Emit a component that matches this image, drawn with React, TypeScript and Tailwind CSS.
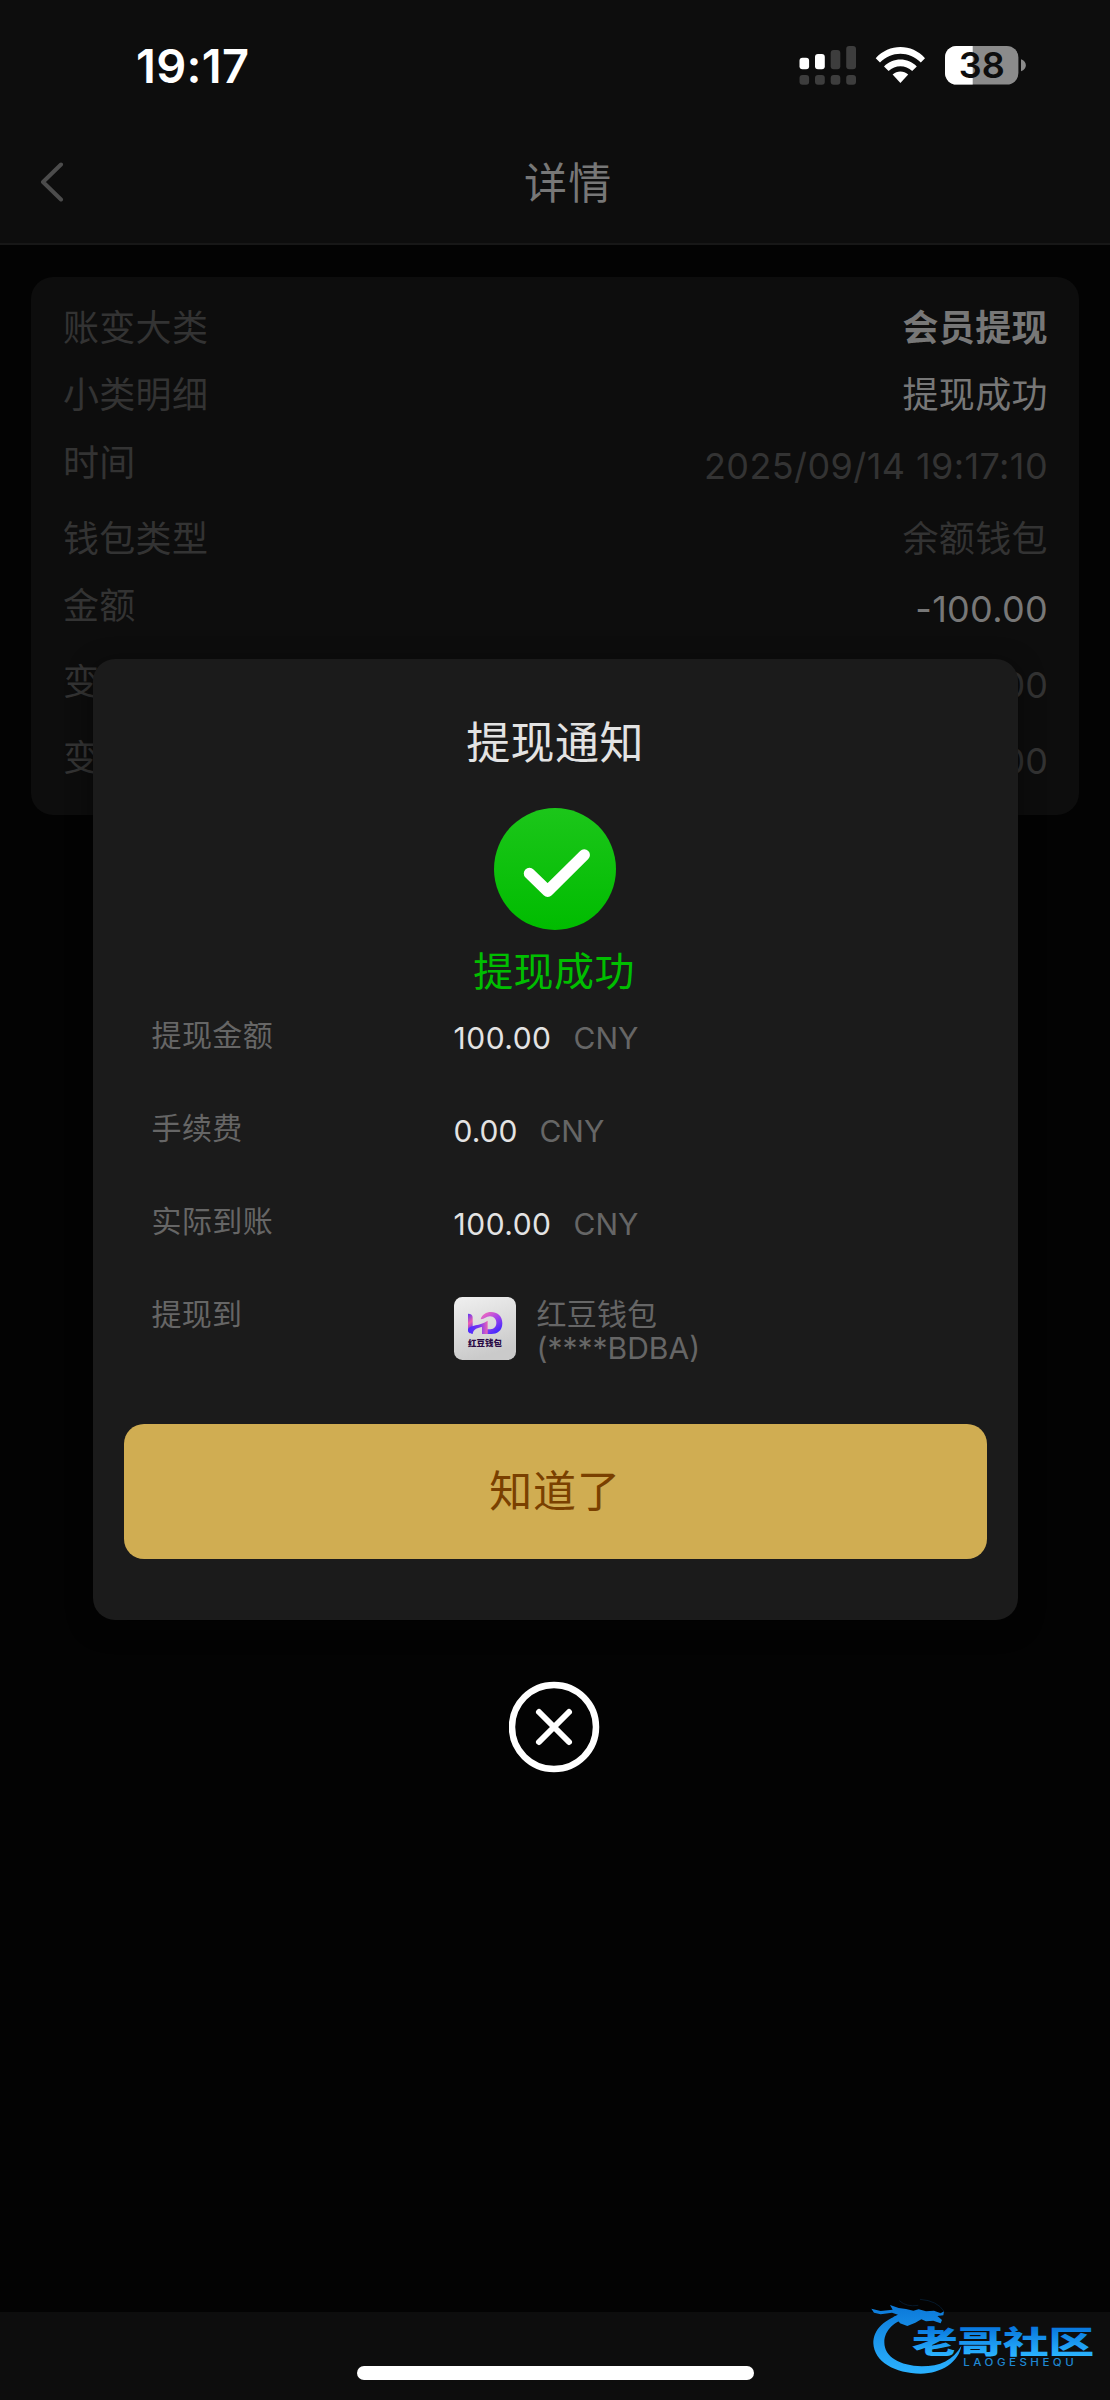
import React from "react";

type DetailRow = {
  label: string;
  value: string;
  height: string;
  valueClass: string;
};

const details: DetailRow[] = [
  { label: "账变大类", value: "会员提现", height: "h-[67px]", valueClass: "font-bold text-[#777] tracking-[0.4px]" },
  { label: "小类明细", value: "提现成功", height: "h-[68px]", valueClass: "text-[#777] tracking-[0.4px]" },
  { label: "时间", value: "2025/09/14 19:17:10", height: "h-[76px]", valueClass: "pt-[3px] text-[#333] tracking-[0.4px]" },
  { label: "钱包类型", value: "余额钱包", height: "h-[67px]", valueClass: "text-[#333] tracking-[0.4px]" },
  { label: "金额", value: "-100.00", height: "h-[76px]", valueClass: "pt-[3px] text-[#777] tracking-[0.3px]" },
  { label: "变更前", value: "100.00", height: "h-[76px]", valueClass: "pt-[3px] text-[#333]" },
  { label: "变更后", value: "0.00", height: "h-[50px]", valueClass: "pt-[3px] text-[#333]" },
];

const amounts = [
  { label: "提现金额", value: "100.00", valueClass: "tracking-[0.5px]" },
  { label: "手续费", value: "0.00", valueClass: "tracking-normal" },
  { label: "实际到账", value: "100.00", valueClass: "tracking-[0.5px]" },
];

const StatusIcons: React.FC = () => (
  <svg width="230" height="42" viewBox="798 44 230 42">
    <g fill="#fff">
      <rect x="799.5" y="57.8" width="9.6" height="11.4" rx="3" />
      <rect x="815" y="54" width="9.8" height="15.2" rx="3" />
    </g>
    <g fill="#3d3d3d">
      <rect x="830.7" y="50" width="9.6" height="19.2" rx="3" />
      <rect x="846.2" y="46" width="9.8" height="23.2" rx="3" />
      <rect x="799.5" y="75" width="9.6" height="9.8" rx="3" />
      <rect x="815" y="75" width="9.8" height="9.8" rx="3" />
      <rect x="830.7" y="75" width="9.6" height="9.8" rx="3" />
      <rect x="846.2" y="75" width="9.8" height="9.8" rx="3" />
    </g>
    <g fill="#fff">
      <path d="M875.7 58.2C889 43.2 912 43.2 925 58.2L920.8 62.4C909.5 50.8 891.3 50.8 880 62.4Z" />
      <path d="M884 66.4C893 57.2 907.8 57.2 916.8 66.4L912.2 71C905.6 64.6 895.2 64.6 888.6 71Z" />
      <path d="M892.6 74.6C897 70.6 903.8 70.6 908.2 74.6L900.4 83Z" />
    </g>
    <clipPath id="charge">
      <rect x="945" y="46" width="73.4" height="38.6" rx="11.5" />
    </clipPath>
    <g clipPath="url(#charge)">
      <rect x="945" y="46" width="74" height="39" fill="#8b8b8b" />
      <rect x="945" y="46" width="27.7" height="39" fill="#fff" />
    </g>
    <path d="M1021 59.3C1027.5 61.5 1027.5 69 1021 71.3Z" fill="#8b8b8b" />
    <text x="981.8" y="78.3" fontSize="36" fontWeight="600" textAnchor="middle" fill="#0d0d0d">38</text>
  </svg>
);

const WalletLogo: React.FC = () => (
  <svg width="62" height="63" viewBox="72 81 186 189" className="shrink-0">
    <defs>
      <linearGradient id="tile" x1="0" y1="0" x2="0.3" y2="1">
        <stop offset="0" stopColor="#f0f0f0" />
        <stop offset="1" stopColor="#cacaca" />
      </linearGradient>
      <linearGradient id="stem" x1="0" y1="0" x2="0.2" y2="1">
        <stop offset="0" stopColor="#5b35f5" />
        <stop offset="0.55" stopColor="#ee5fae" />
        <stop offset="1" stopColor="#5a2df5" />
      </linearGradient>
      <linearGradient id="bar" x1="0" y1="0" x2="1" y2="0">
        <stop offset="0" stopColor="#4a2bff" />
        <stop offset="0.6" stopColor="#7a35f0" />
        <stop offset="1" stopColor="#e864b8" />
      </linearGradient>
      <linearGradient id="bowl" x1="0" y1="0" x2="0.7" y2="1">
        <stop offset="0" stopColor="#ff74b4" />
        <stop offset="0.5" stopColor="#a944e8" />
        <stop offset="1" stopColor="#3f28ff" />
      </linearGradient>
    </defs>
    <rect x="72" y="81" width="186" height="189" rx="25" fill="url(#tile)" />
    <path d="M114 131Q128 131 128 143V172L114 186Z" fill="url(#stem)" />
    <path d="M152 148C158 118 217 116 217 160C217 184 200 192 184 192H158L172 178H181C206 178 205 139 180 139C168 139 164 148 152 148Z" fill="url(#bowl)" />
    <path d="M114 178C120 163 150 169 173 152V192H156V171C144 174 130 176 128 192C118 192 114 188 114 178Z" fill="url(#bar)" />
    <text x="165" y="227" fontSize="25.5" fontWeight="900" textAnchor="middle" fill="#2a0a45">红豆钱包</text>
  </svg>
);

const CommunityMark: React.FC = () => (
  <svg width="260" height="120" viewBox="0 0 780 360" className="absolute right-0 bottom-0">
    <defs>
      <linearGradient id="ring" gradientUnits="userSpaceOnUse" x1="0" y1="75" x2="0" y2="280">
        <stop offset="0" stopColor="#0b78d8" />
        <stop offset="1" stopColor="#2bb2ff" />
      </linearGradient>
      <linearGradient id="word" gradientUnits="userSpaceOnUse" x1="0" y1="-82" x2="0" y2="8">
        <stop offset="0" stopColor="#0674dc" />
        <stop offset="1" stopColor="#2bb4ff" />
      </linearGradient>
    </defs>
    <g fill="url(#ring)">
      <path d="M170 98C100 115 70 150 70 190C72 245 135 281 212 281C275 280 327 245 334 197C310 240 270 259 215 259C150 257 103 232 103 187C103 150 135 120 180 114Z" />
      <path d="M64 86L92 93L128 89L120 75L146 84L168 87L190 92L206 88L228 94L252 92L272 100L282 94L280 106L262 108L276 120L272 130L250 122L228 124L214 118L196 128L172 138L150 130L140 116L128 112L144 104L126 98L92 103L72 98Z" />
    </g>
    <g fill="none" stroke="#06192a" strokeWidth="3">
      <path d="M148 62Q170 82 205 76" />
      <path d="M210 58Q262 62 282 94" />
    </g>
    <text transform="translate(186 220) scale(1.49 1)" fontSize="92" fontWeight="900" fill="url(#word)" textLength="367" lengthAdjust="spacing">老哥社区</text>
    <text transform="translate(340 259) scale(1.15 1)" fontSize="30" fontWeight="500" fill="#1f88d2" textLength="288" lengthAdjust="spacing">LAOGESHEQU</text>
  </svg>
);

const NoticeDialog: React.FC = () => (
  <div className="absolute inset-x-0 top-[659px] flex flex-col items-center">
    <div className="w-[925px] h-[961px] rounded-[22px] bg-[#1b1b1b] px-[31px] shadow-[0_6px_24px_rgba(0,0,0,0.5)] flex flex-col items-center">
      <h2 className="mt-[54px] h-[60px] leading-[60px] text-[44px] tracking-[0.4px] text-[#e3e3e3]">提现通知</h2>
      <svg width="122" height="122" viewBox="0 0 122 122" className="mt-[35px]">
        <defs>
          <linearGradient id="ok" x1="0" y1="0" x2="0" y2="1">
            <stop offset="0" stopColor="#1cc61a" />
            <stop offset="1" stopColor="#00bc00" />
          </linearGradient>
        </defs>
        <circle cx="61" cy="61" r="61" fill="url(#ok)" />
        <path d="M35.5 65.5L53.7 83.2L90.2 47" fill="none" stroke="#fff" strokeWidth="11.5" strokeLinecap="round" strokeLinejoin="round" />
      </svg>
      <p className="mt-[14px] mr-[2px] h-[56px] leading-[56px] text-[40px] tracking-[0.4px] text-[#00be00]">提现成功</p>

      <div className="w-full pl-[28px] pt-[15px] text-[30px] leading-[40px] text-[#666]">
        {amounts.map((row) => (
          <div key={row.label} className="flex h-[93px]">
            <span className="w-[302px] tracking-[0.4px]">{row.label}</span>
            <span className={`pt-[3px] text-[#e3e3e3] ${row.valueClass}`}>{row.value}</span>
            <span className="pt-[3px] ml-[22px]">CNY</span>
          </div>
        ))}
        <div className="flex">
          <span className="w-[302px] tracking-[0.2px]">提现到</span>
          <div className="flex pt-[3px]">
            <WalletLogo />
            <div className="ml-[21px] leading-[34px]">
              <div className="tracking-[0.2px]">红豆钱包</div>
              <div>(****BDBA)</div>
            </div>
          </div>
        </div>
      </div>

      <button className="mt-[59px] h-[135px] w-full shrink-0 rounded-[20px] bg-[#d0ad52] text-[43px] tracking-[0.8px] text-[#7a4000]">
        知道了
      </button>
    </div>

    <svg width="92" height="92" viewBox="0 0 92 92" fill="none" stroke="#fff" className="mt-[61px]">
      <circle cx="45" cy="46" r="42" strokeWidth="6.5" />
      <path d="M30 31L60 61M60 31L30 61" strokeWidth="6" strokeLinecap="round" />
    </svg>
  </div>
);

const App: React.FC = () => {
  return (
    <div className="relative flex h-[2400px] w-[1110px] flex-col overflow-hidden bg-[#030303] font-['Inter','Noto_Sans_CJK_SC',sans-serif]">
      <header className="h-[245px] border-b-2 border-[#171717] bg-[#0d0d0d]">
        <div className="flex h-[130px] items-start justify-between pl-[136px] pr-[82px]">
          <span className="mt-[36px] leading-[60px] text-[47px] tracking-[0.3px] font-semibold text-white">19:17</span>
          <div className="mt-[44px]">
            <StatusIcons />
          </div>
        </div>
        <div className="flex h-[106px] items-center">
          <svg width="24" height="40" viewBox="0 0 24 40" className="ml-[40px] mb-[2px]" fill="none" stroke="#4c4c4c" strokeWidth="4" strokeLinecap="round" strokeLinejoin="round">
            <path d="M21 2.5L3 20L21 37.5" />
          </svg>
          <h1 className="ml-[460px] text-[43px] leading-[60px] tracking-[1.2px] text-[#777]">详情</h1>
        </div>
      </header>

      <main className="mx-[31px] mt-[32px] h-[538px] rounded-[22px] bg-[#0d0d0d] pl-[32px] pr-[31px] pt-[27px] text-[36px] leading-[48px]">
        {details.map((row) => (
          <div key={row.label} className={`flex justify-between ${row.height}`}>
            <span className="text-[#333] tracking-[0.3px]">{row.label}</span>
            <span className={row.valueClass}>{row.value}</span>
          </div>
        ))}
      </main>

      <footer className="mt-auto flex h-[88px] justify-center bg-[#0d0d0d] pt-[54px]">
        <div className="h-[14px] w-[397px] rounded-full bg-white" />
      </footer>

      <NoticeDialog />
      <CommunityMark />
    </div>
  );
};

export default App;
